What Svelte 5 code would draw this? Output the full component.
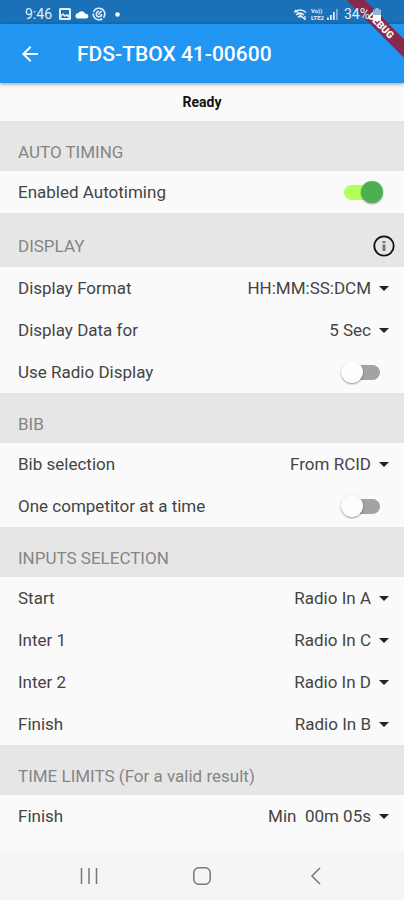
<script>
  const sections = [
    {
      title: 'AUTO TIMING',
      rows: [{ id: 'auto', label: 'Enabled Autotiming', toggle: true }]
    },
    {
      title: 'DISPLAY',
      info: true,
      rows: [
        { id: 'format', label: 'Display Format', options: ['HH:MM:SS:DCM', 'SS:DCM'] },
        { id: 'duration', label: 'Display Data for', options: ['5 Sec', '10 Sec'] },
        { id: 'radio', label: 'Use Radio Display', toggle: true }
      ]
    },
    {
      title: 'BIB',
      rows: [
        { id: 'bib', label: 'Bib selection', options: ['From RCID', 'Manual'] },
        { id: 'single', label: 'One competitor at a time', toggle: true }
      ]
    },
    {
      title: 'INPUTS SELECTION',
      rows: [
        { id: 'start', label: 'Start', options: ['Radio In A', 'Radio In B'] },
        { id: 'inter1', label: 'Inter 1', options: ['Radio In C', 'Radio In D'] },
        { id: 'inter2', label: 'Inter 2', options: ['Radio In D', 'Radio In C'] },
        { id: 'finish', label: 'Finish', options: ['Radio In B', 'Radio In A'] }
      ]
    },
    {
      title: 'TIME LIMITS (For a valid result)',
      rows: [{ id: 'limit', label: 'Finish', options: ['Min \u00a000m 05s', 'Min \u00a000m 10s'] }]
    }
  ];

  let checked = { auto: true, radio: false, single: false };
</script>

<div class="screen">
  <div class="status">
    <span class="clock">9:46</span>
    <svg width="14" height="14" viewBox="0 0 14 14" aria-hidden="true">
      <path fill="#e3eef8" fill-rule="evenodd" d="M2.500 1h9A1.500 1.500 0 0 1 13 2.500v9a1.500 1.500 0 0 1-1.500 1.500h-9A1.500 1.500 0 0 1 1 11.500v-9A1.500 1.500 0 0 1 2.500 1zM3 3v5l2-2 2 2 2-1 2 1V3zM3 11h8L8.500 9 7 10 4.500 8z" />
    </svg>
    <svg width="14" height="14" viewBox="0 0 14 14" aria-hidden="true">
      <path fill="#fff" d="M3 11.500a2.700 2.700 0 0 1 .3-5.400 3.800 3.800 0 0 1 6.900.7 2.400 2.400 0 0 1 1.300 4.700z" />
    </svg>
    <svg width="14" height="14" viewBox="0 0 14 14" fill="none" stroke="#e3eef8" stroke-width="1.600" aria-hidden="true">
      <path stroke-dasharray="13 1.500" d="M7 1.200a5.800 5.800 0 1 1-.01 0" />
      <path d="M7 4.300a2.700 2.700 0 1 0 2.700 2.700M6.500 7.500l3-3.500" />
    </svg>
    <svg class="dot" width="5" height="5" viewBox="0 0 5 5" aria-hidden="true">
      <circle cx="2.500" cy="2.500" r="2.300" fill="#fff" />
    </svg>
    <span class="spacer"></span>
    <svg width="15" height="13" viewBox="0 0 15 13" fill="none" stroke="#e3eef8" aria-hidden="true">
      <path stroke-width="1.500" d="M1 4.500C4.500 1 9.500 1 13 4.500M3 7c2.500-2.500 5.500-2.500 8 0M5 9.300c1.300-1.200 2.700-1.200 4 0" />
      <path stroke-width="1.300" d="M2 2l10 9.500M12 8v4" />
    </svg>
    <span class="volte"><span>Vo))</span><span>LTE2</span></span>
    <svg width="11" height="12" viewBox="0 0 11 12" fill="#e3eef8" aria-hidden="true">
      <path d="M0 9.500h1.800V12H0zM3 7h1.800v5H3zM6 4h1.800v8H6z" />
      <path opacity=".5" d="M9 1h1.800v11H9z" />
    </svg>
    <span class="battery">34%</span>
    <svg width="8" height="13" viewBox="0 0 8 13" aria-hidden="true">
      <path fill="#8fb8d8" d="M2.500 0h3v1.500H7q1 0 1 1V7H0V2.500q0-1 1-1h1.500z" />
      <path fill="#fff" d="M0 7h8v5q0 1-1 1H1q-1 0-1-1z" />
    </svg>
  </div>

  <header>
    <button class="back" aria-label="Back">
      <svg width="24" height="24" viewBox="0 0 24 24">
        <path fill="#fff" d="M20 11H7.830l5.590-5.590L12 4l-8 8 8 8 1.410-1.410L7.830 13H20z" />
      </svg>
    </button>
    <h1>FDS-TBOX 41-00600</h1>
  </header>

  <div class="corner"><span class="debug">DEBUG</span></div>

  <main>
    <p class="state">Ready</p>
    {#each sections as section}
      <section>
        <div class="head" class:tall={section.info}>
          <h2>{section.title}</h2>
          {#if section.info}
            <button class="info" aria-label="Display info">
              <svg width="24" height="24" viewBox="0 0 24 24">
                <circle cx="12" cy="12" r="9.700" fill="none" stroke="#111" stroke-width="1.800" />
                <path fill="#777" d="M10.500 7h3v2h-3zM10.500 10.500h3V17h-3z" />
              </svg>
            </button>
          {/if}
        </div>
        {#each section.rows as row}
          <div class="row">
            <label for={row.id}>{row.label}</label>
            {#if row.toggle}
              <input id={row.id} class="switch" type="checkbox" bind:checked={checked[row.id]} />
            {:else}
              <span class="picker">
                <select id={row.id}>
                  {#each row.options as option}
                    <option>{option}</option>
                  {/each}
                </select>
                <svg width="10" height="5" viewBox="0 0 10 5" aria-hidden="true">
                  <path fill="#222" d="M0 0h10L5 5z" />
                </svg>
              </span>
            {/if}
          </div>
        {/each}
      </section>
    {/each}
  </main>

  <nav>
    <button aria-label="Recent apps">
      <svg width="20" height="20" viewBox="0 0 20 20" fill="none" stroke="#777" stroke-width="1.500">
        <path d="M2.500 2v16M10 2v16M17.500 2v16" />
      </svg>
    </button>
    <button aria-label="Home">
      <svg width="20" height="20" viewBox="0 0 20 20" fill="none" stroke="#777" stroke-width="1.500">
        <rect x="1.800" y="1.800" width="16.400" height="16.400" rx="5" />
      </svg>
    </button>
    <button aria-label="Back">
      <svg width="20" height="20" viewBox="0 0 20 20" fill="none" stroke="#777" stroke-width="1.500">
        <path d="M15 2 7 10l8 8" />
      </svg>
    </button>
  </nav>
</div>

<style>
  :global(body) {
    margin: 0;
    background: #fafafa;
  }

  .screen {
    position: relative;
    display: flex;
    flex-direction: column;
    min-height: 100vh;
    font-family: Roboto, 'Liberation Sans', sans-serif;
    font-size: 17px;
    color: #444;
  }

  button {
    display: flex;
    align-items: center;
    justify-content: center;
    padding: 0;
    border: 0;
    background: none;
  }

  .status {
    display: flex;
    align-items: center;
    gap: 3px;
    height: 24px;
    box-sizing: border-box;
    padding: 4px 23px 0 25px;
    background: #1a71b8;
    color: #e3eef8;
    font-size: 14px;
    line-height: 20px;
  }

  /* system icons stay above the debug ribbon */
  .status > * {
    position: relative;
    z-index: 3;
  }

  .clock {
    margin-right: 3px;
  }

  .dot {
    margin-left: 6px;
  }

  .spacer {
    flex: 1;
  }

  .volte {
    display: flex;
    flex-direction: column;
    font-size: 6px;
    font-weight: 700;
    line-height: 7px;
  }

  .battery {
    margin-left: 3px;
  }

  header {
    z-index: 1;
    display: flex;
    align-items: center;
    height: 59px;
    padding-left: 18px;
    background: #2196f3;
    box-shadow: 0 1px 4px rgba(0, 0, 0, 0.4);
  }

  .back {
    width: 24px;
    height: 24px;
    margin-right: 35px;
  }

  h1 {
    margin: 0;
    font-size: 21px;
    font-weight: 500;
    color: #fff;
  }

  .corner {
    position: absolute;
    z-index: 2;
    top: 0;
    right: 0;
    width: 80px;
    height: 80px;
    overflow: hidden;
    pointer-events: none;
  }

  .debug {
    position: absolute;
    top: 19px;
    right: -37px;
    width: 120px;
    transform: rotate(45deg);
    background: #852a4a;
    color: #fff;
    font-size: 10px;
    font-weight: 900;
    line-height: 13px;
    text-align: center;
  }

  main {
    flex: 1;
    background: #fafafa;
  }

  .state {
    margin: 0;
    font-size: 14px;
    font-weight: 700;
    line-height: 38px;
    color: #111;
    text-align: center;
  }

  .head {
    display: flex;
    align-items: center;
    justify-content: space-between;
    height: 50px;
    box-sizing: border-box;
    padding: 12px 8px 0 18px;
    background: #e6e6e6;
  }

  .head.tall {
    height: 54px;
  }

  h2 {
    margin: 0;
    font-size: 17px;
    font-weight: 400;
    color: #858585;
  }

  .row {
    display: flex;
    align-items: center;
    justify-content: space-between;
    height: 42px;
    padding: 0 15px 0 18px;
  }

  .picker {
    display: grid;
    align-items: center;
    justify-items: end;
  }

  .picker > * {
    grid-area: 1 / 1;
  }

  .picker svg {
    pointer-events: none;
  }

  select {
    appearance: none;
    field-sizing: content;
    padding: 0 18px 0 0;
    border: 0;
    background: none;
    font: inherit;
    color: inherit;
  }

  .switch {
    appearance: none;
    display: flex;
    align-items: center;
    width: 36px;
    height: 15px;
    margin: 0 9px 0 0;
    border-radius: 8px;
    background: #a3a3a3;
  }

  .switch::before {
    content: '';
    flex: none;
    width: 22px;
    height: 22px;
    margin: 0 -3px;
    border-radius: 50%;
    background: #fdfdfd;
    box-shadow: 0 1px 2px rgba(0, 0, 0, 0.4);
  }

  .switch:checked {
    justify-content: flex-end;
    background: #b2ff59;
  }

  .switch:checked::before {
    background: #4caf50;
  }

  nav {
    display: flex;
    justify-content: space-around;
    height: 49px;
    padding: 0 32px;
    background: #f5f5f5;
  }

  nav button {
    flex: 1;
  }
</style>
